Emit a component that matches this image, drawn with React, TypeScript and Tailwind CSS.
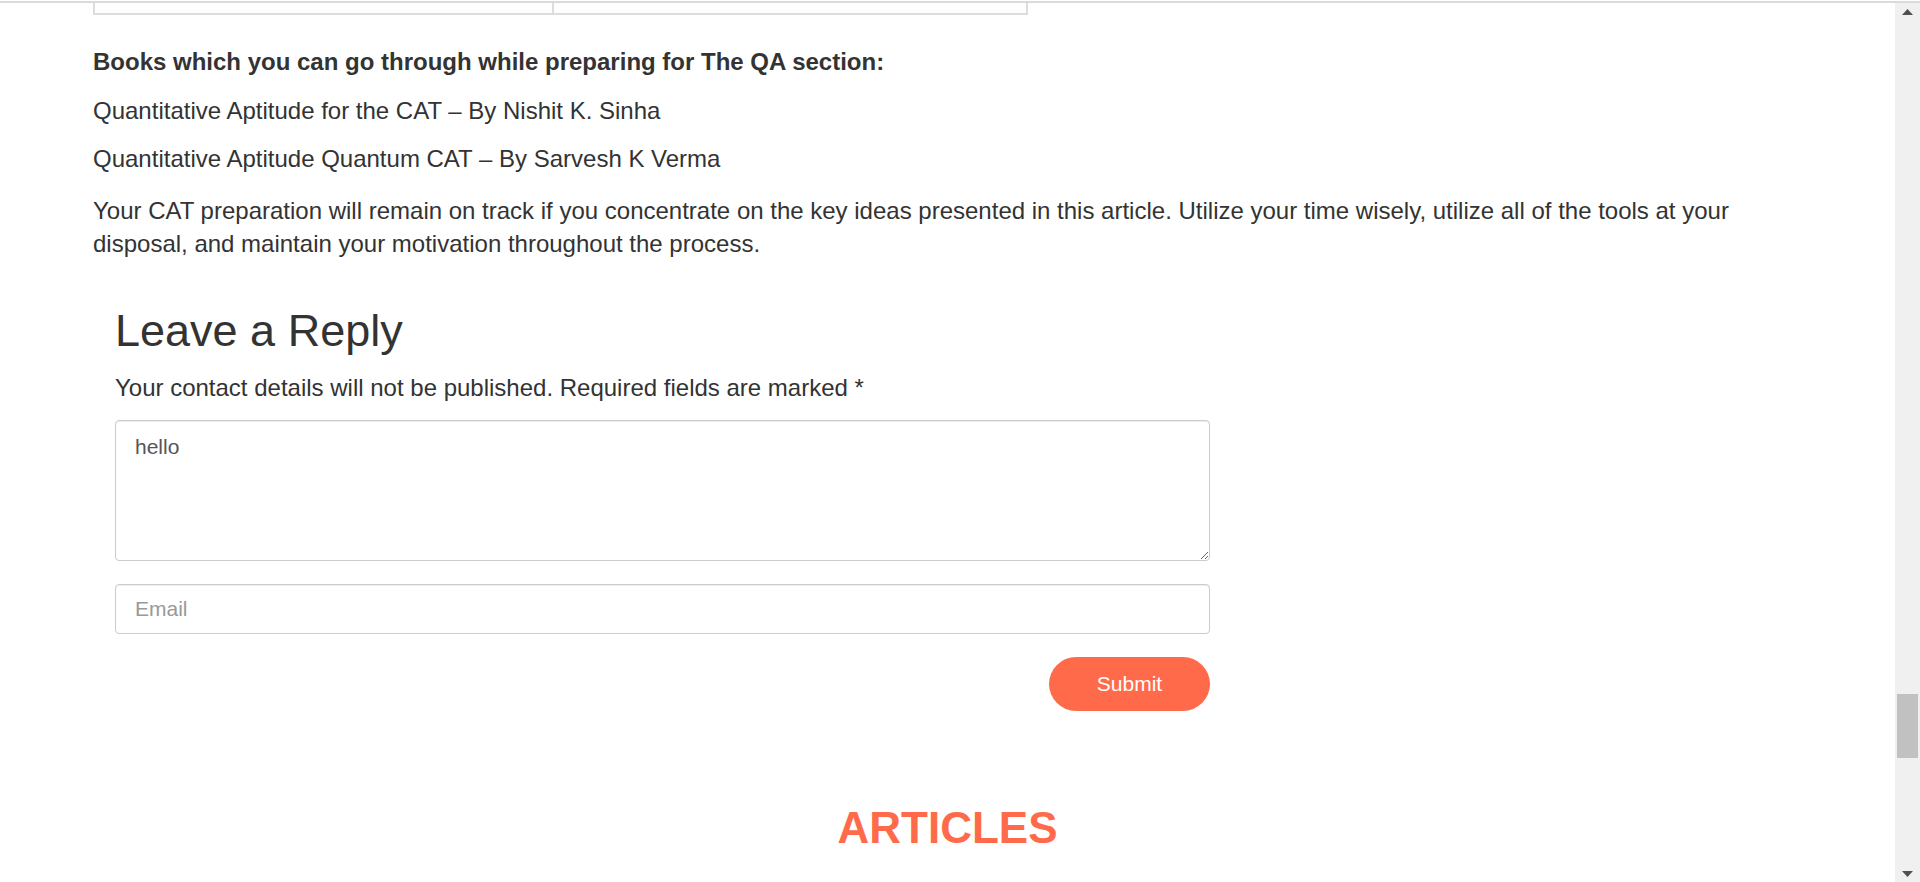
import React from "react";

export default function App() {
  return (
    <div className="w-[1920px] h-[882px] overflow-hidden bg-white flex flex-col font-['Liberation_Sans',Arial,sans-serif] text-[#333333]">
      <div className="h-[2px] mt-[1px] bg-[#dadada] shrink-0" />
      <div className="flex flex-1 min-h-0">
        <div className="flex-1 min-w-0 overflow-hidden px-[93px]">
          <div className="w-[935px] h-[12px] flex border-x-2 border-b-2 border-[#dddddd]">
            <div className="w-[459px] border-r-2 border-[#dddddd]" />
            <div className="flex-1" />
          </div>

          <div className="mt-[30px] text-[24px] leading-[1.4]">
            <p className="font-bold mb-[15px]">Books which you can go through while preparing for The QA section:</p>
            <p className="mb-[15px]">Quantitative Aptitude for the CAT – By Nishit K. Sinha</p>
            <p className="mb-[18px]">Quantitative Aptitude Quantum CAT – By Sarvesh K Verma</p>
            <p>
              Your CAT preparation will remain on track if you concentrate on the key ideas presented in this article. Utilize your time wisely, utilize all of the tools at your disposal, and maintain your motivation throughout the process.
            </p>
          </div>

          <div className="pl-[22px] mt-[47px] w-[1117px]">
            <h3 className="text-[45px] leading-none font-normal">Leave a Reply</h3>
            <p className="mt-[18px] text-[24px] leading-[1.4]">
              Your contact details will not be published. Required fields are marked *
            </p>
            <form className="mt-[15px]" onSubmit={(e) => e.preventDefault()}>
              <textarea
                defaultValue="hello"
                className="block w-full h-[141px] border border-[#cccccc] rounded-[4px] px-[19px] pt-[10px] text-[21px] text-[#555555] shadow-[inset_0_1px_1px_rgba(0,0,0,0.075)] outline-none font-['Liberation_Sans',Arial,sans-serif]"
              />
              <input
                type="email"
                placeholder="Email"
                className="block w-full mt-[23px] h-[50px] border border-[#cccccc] rounded-[4px] px-[19px] text-[21px] text-[#555555] placeholder:text-[#999999] shadow-[inset_0_1px_1px_rgba(0,0,0,0.075)] outline-none font-['Liberation_Sans',Arial,sans-serif]"
              />
              <div className="flex justify-end mt-[23px]">
                <button
                  type="submit"
                  className="w-[161px] h-[54px] rounded-full bg-[#ff6b4a] text-white text-[21px] font-['Liberation_Sans',Arial,sans-serif]"
                >
                  Submit
                </button>
              </div>
            </form>
          </div>

          <h2 className="mt-[95px] text-center text-[44px] font-bold leading-none text-[#ff6b4a]">ARTICLES</h2>
        </div>

        <div className="w-[25px] shrink-0 bg-[#f0f0f0] flex flex-col items-center">
          <svg width="11" height="6" viewBox="0 0 11 6" className="mt-[6px]">
            <polygon points="5.5,0 11,6 0,6" fill="#505050" />
          </svg>
          <div className="mt-[679px] w-[21px] h-[64px] bg-[#c1c1c1]" />
          <div className="flex-1" />
          <svg width="11" height="6" viewBox="0 0 11 6" className="mb-[5px]">
            <polygon points="0,0 11,0 5.5,6" fill="#505050" />
          </svg>
        </div>
      </div>
    </div>
  );
}
